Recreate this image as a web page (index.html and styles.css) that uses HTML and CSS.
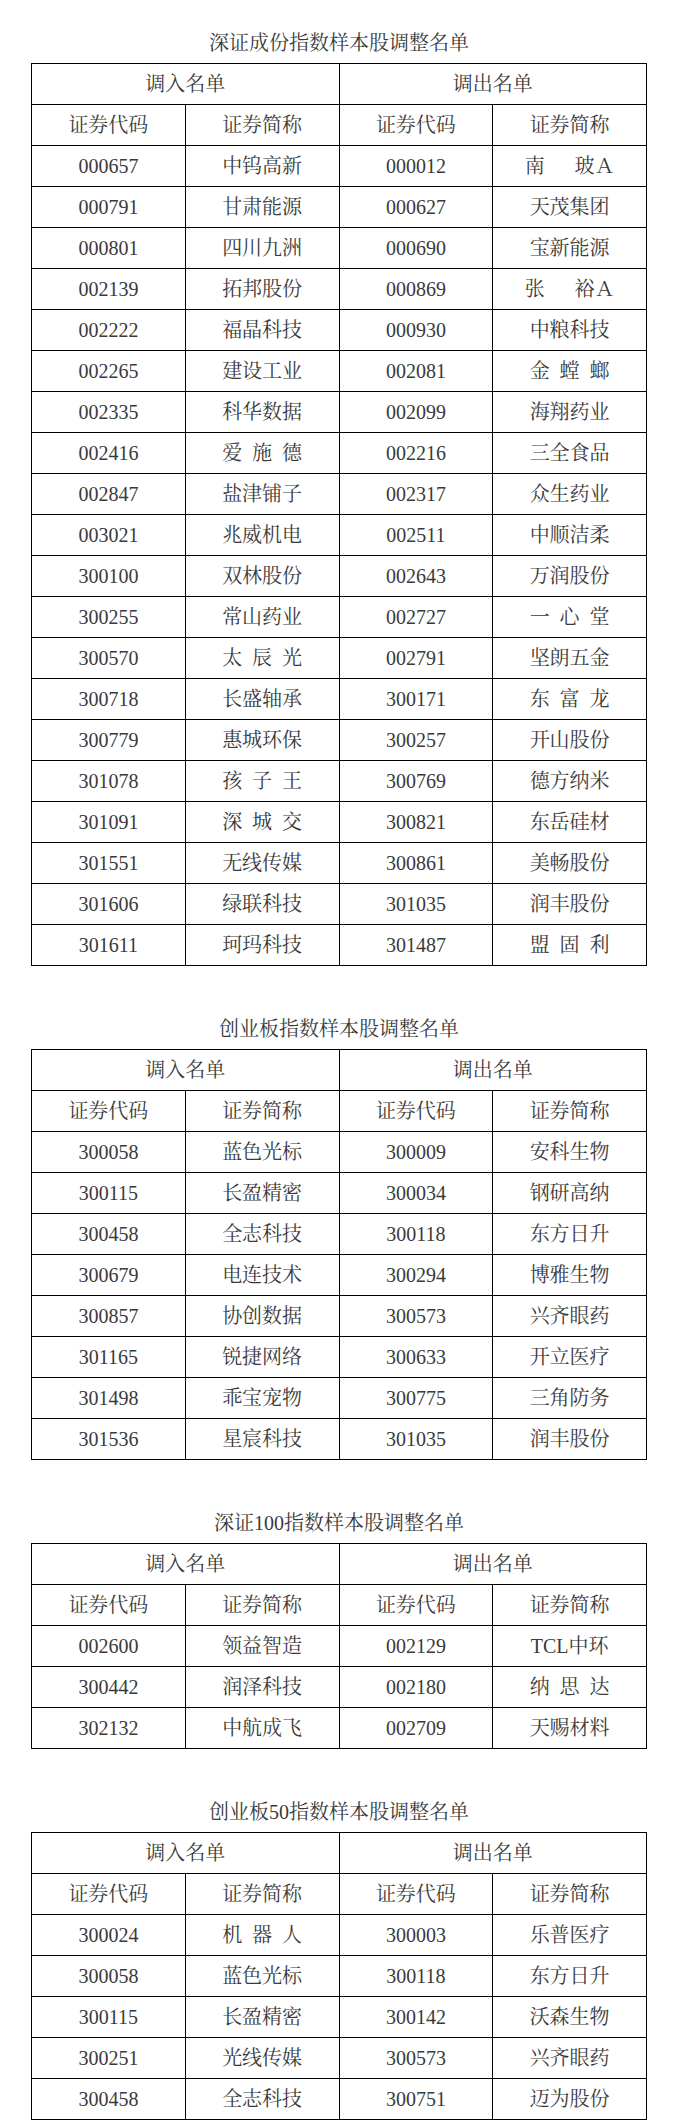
FILE: index.html
```html
<!DOCTYPE html>
<html lang="zh-CN">
<head>
<meta charset="utf-8">
<title>指数样本股调整名单</title>
<link rel="stylesheet" href="styles.css">
</head>
<body>
<div class="page">

<section class="block block-first">
<h2 class="title">深证成份指数样本股调整名单</h2>
<table class="list">
<colgroup><col><col><col><col></colgroup>
<thead>
<tr><th colspan="2">调入名单</th><th colspan="2">调出名单</th></tr>
<tr><th>证券代码</th><th>证券简称</th><th>证券代码</th><th>证券简称</th></tr>
</thead>
<tbody>
<tr><td>000657</td><td>中钨高新</td><td>000012</td><td class="sp">南　  玻Ａ</td></tr>
<tr><td>000791</td><td>甘肃能源</td><td>000627</td><td>天茂集团</td></tr>
<tr><td>000801</td><td>四川九洲</td><td>000690</td><td>宝新能源</td></tr>
<tr><td>002139</td><td>拓邦股份</td><td>000869</td><td class="sp">张　  裕Ａ</td></tr>
<tr><td>002222</td><td>福晶科技</td><td>000930</td><td>中粮科技</td></tr>
<tr><td>002265</td><td>建设工业</td><td>002081</td><td class="sp">金  螳  螂</td></tr>
<tr><td>002335</td><td>科华数据</td><td>002099</td><td>海翔药业</td></tr>
<tr><td>002416</td><td class="sp">爱  施  德</td><td>002216</td><td>三全食品</td></tr>
<tr><td>002847</td><td>盐津铺子</td><td>002317</td><td>众生药业</td></tr>
<tr><td>003021</td><td>兆威机电</td><td>002511</td><td>中顺洁柔</td></tr>
<tr><td>300100</td><td>双林股份</td><td>002643</td><td>万润股份</td></tr>
<tr><td>300255</td><td>常山药业</td><td>002727</td><td class="sp">一  心  堂</td></tr>
<tr><td>300570</td><td class="sp">太  辰  光</td><td>002791</td><td>坚朗五金</td></tr>
<tr><td>300718</td><td>长盛轴承</td><td>300171</td><td class="sp">东  富  龙</td></tr>
<tr><td>300779</td><td>惠城环保</td><td>300257</td><td>开山股份</td></tr>
<tr><td>301078</td><td class="sp">孩  子  王</td><td>300769</td><td>德方纳米</td></tr>
<tr><td>301091</td><td class="sp">深  城  交</td><td>300821</td><td>东岳硅材</td></tr>
<tr><td>301551</td><td>无线传媒</td><td>300861</td><td>美畅股份</td></tr>
<tr><td>301606</td><td>绿联科技</td><td>301035</td><td>润丰股份</td></tr>
<tr><td>301611</td><td>珂玛科技</td><td>301487</td><td class="sp">盟  固  利</td></tr>
</tbody>
</table>
</section>

<section class="block">
<h2 class="title">创业板指数样本股调整名单</h2>
<table class="list">
<colgroup><col><col><col><col></colgroup>
<thead>
<tr><th colspan="2">调入名单</th><th colspan="2">调出名单</th></tr>
<tr><th>证券代码</th><th>证券简称</th><th>证券代码</th><th>证券简称</th></tr>
</thead>
<tbody>
<tr><td>300058</td><td>蓝色光标</td><td>300009</td><td>安科生物</td></tr>
<tr><td>300115</td><td>长盈精密</td><td>300034</td><td>钢研高纳</td></tr>
<tr><td>300458</td><td>全志科技</td><td>300118</td><td>东方日升</td></tr>
<tr><td>300679</td><td>电连技术</td><td>300294</td><td>博雅生物</td></tr>
<tr><td>300857</td><td>协创数据</td><td>300573</td><td>兴齐眼药</td></tr>
<tr><td>301165</td><td>锐捷网络</td><td>300633</td><td>开立医疗</td></tr>
<tr><td>301498</td><td>乖宝宠物</td><td>300775</td><td>三角防务</td></tr>
<tr><td>301536</td><td>星宸科技</td><td>301035</td><td>润丰股份</td></tr>
</tbody>
</table>
</section>

<section class="block">
<h2 class="title">深证100指数样本股调整名单</h2>
<table class="list">
<colgroup><col><col><col><col></colgroup>
<thead>
<tr><th colspan="2">调入名单</th><th colspan="2">调出名单</th></tr>
<tr><th>证券代码</th><th>证券简称</th><th>证券代码</th><th>证券简称</th></tr>
</thead>
<tbody>
<tr><td>002600</td><td>领益智造</td><td>002129</td><td>TCL中环</td></tr>
<tr><td>300442</td><td>润泽科技</td><td>002180</td><td class="sp">纳  思  达</td></tr>
<tr><td>302132</td><td>中航成飞</td><td>002709</td><td>天赐材料</td></tr>
</tbody>
</table>
</section>

<section class="block">
<h2 class="title">创业板50指数样本股调整名单</h2>
<table class="list">
<colgroup><col><col><col><col></colgroup>
<thead>
<tr><th colspan="2">调入名单</th><th colspan="2">调出名单</th></tr>
<tr><th>证券代码</th><th>证券简称</th><th>证券代码</th><th>证券简称</th></tr>
</thead>
<tbody>
<tr><td>300024</td><td class="sp">机  器  人</td><td>300003</td><td>乐普医疗</td></tr>
<tr><td>300058</td><td>蓝色光标</td><td>300118</td><td>东方日升</td></tr>
<tr><td>300115</td><td>长盈精密</td><td>300142</td><td>沃森生物</td></tr>
<tr><td>300251</td><td>光线传媒</td><td>300573</td><td>兴齐眼药</td></tr>
<tr><td>300458</td><td>全志科技</td><td>300751</td><td>迈为股份</td></tr>
</tbody>
</table>
</section>

</div>
</body>
</html>
```

FILE: styles.css
```css
html, body {
  margin: 0;
  padding: 0;
  background: #ffffff;
}

body {
  font-family: "Liberation Serif", "Noto Serif CJK SC", "Noto Sans CJK SC", serif;
  color: #3a3a3a;
  font-size: 20px;
}

.page {
  width: 616px;
  margin: 0 0 0 31px;
  padding-bottom: 11px;
}

.block {
  margin-top: 48px;
}

.block-first {
  margin-top: 28px;
}

.title {
  margin: 0 0 5px 0;
  height: 30px;
  line-height: 30px;
  font-size: 20px;
  font-weight: normal;
  text-align: center;
  color: #3a3a3a;
}

.list {
  width: 616px;
  border-collapse: collapse;
  table-layout: fixed;
}

.list col {
  width: 25%;
}

.list th,
.list td {
  box-sizing: border-box;
  height: 41px;
  padding: 0;
  border: 1px solid #000000;
  text-align: center;
  vertical-align: middle;
  font-weight: normal;
  font-size: 20px;
  line-height: 24px;
  white-space: nowrap;
  color: #3a3a3a;
}

.list td.sp {
  white-space: pre;
}
```
